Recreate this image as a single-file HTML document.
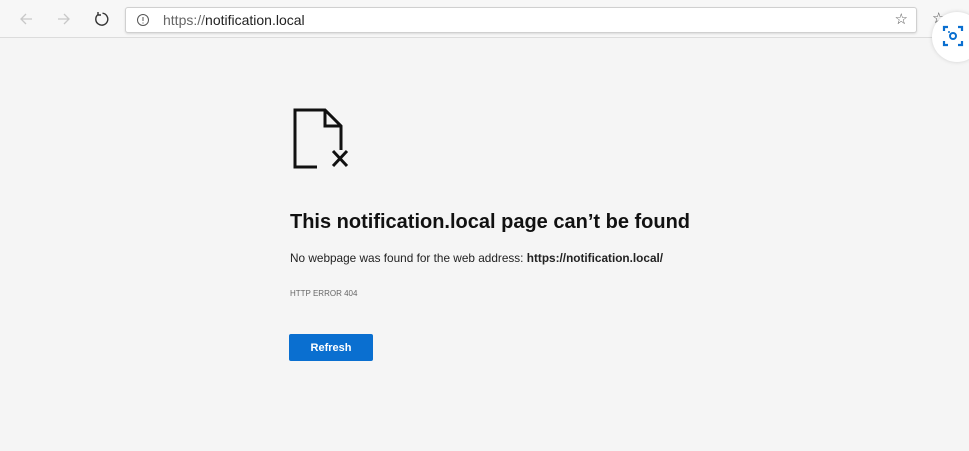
<!DOCTYPE html><html><head><style>
body{margin:0;width:969px;height:451px;background:#f5f5f5;font-family:"Liberation Sans",sans-serif;position:relative;overflow:hidden}
.bar{position:absolute;top:0;left:0;width:969px;height:37px;background:#f7f7f7;border-bottom:1px solid #dcdcdc}
.url{position:absolute;left:125px;top:7px;width:790px;height:24px;background:#fff;border:1px solid #d0d0d0;border-radius:3px;box-shadow:0 1px 2px rgba(0,0,0,.12)}
.url span{position:absolute;left:37px;top:4px;font-size:14px;color:#222}
.url span i{font-style:normal;color:#666}
h1{position:absolute;left:290px;top:211px;margin:0;font-size:20px;font-weight:bold;color:#111;white-space:nowrap}
.p{position:absolute;left:290px;top:251px;font-size:11.8px;color:#222;white-space:nowrap}
.e{position:absolute;left:290px;top:289px;font-size:8px;color:#666}
.btn{position:absolute;left:289px;top:334px;width:84px;height:27px;background:#0a6fd0;border-radius:2px;color:#fff;font-size:11px;font-weight:bold;text-align:center;line-height:28px}
.circ{position:absolute;left:932px;top:12px;width:50px;height:50px;border-radius:50%;background:#fff;box-shadow:0 0 4px rgba(0,0,0,.15)}
</style></head><body>
<div class="bar">
<svg style="position:absolute;left:18px;top:11px" width="16" height="16"><path d="M14 8H3M8 3L3 8l5 5" stroke="#c8c8c8" stroke-width="1.3" fill="none"/></svg>
<svg style="position:absolute;left:56px;top:11px" width="16" height="16"><path d="M2 8h11M8 3l5 5-5 5" stroke="#c8c8c8" stroke-width="1.3" fill="none"/></svg>
<svg style="position:absolute;left:93px;top:11px" width="16" height="16"><path d="M5 3.5A6 6 0 1 0 9.5 2.2M5 1v3h3" stroke="#333" stroke-width="1.4" fill="none"/></svg>
<div class="url"><svg style="position:absolute;left:10px;top:5px" width="14" height="14"><circle cx="7" cy="7" r="5.5" stroke="#555" fill="none"/><path d="M7 4v4M7 9.5v1" stroke="#555"/></svg><span><i>https://</i>notification.local</span>
<div style="position:absolute;right:8px;top:2px;font-size:15px;color:#555">☆</div></div>
<div style="position:absolute;left:932px;top:9px;font-size:15px;color:#444">☆</div>
</div>
<div class="circ"><svg style="position:absolute;left:10px;top:12px" width="22" height="24"><path d="M2 7V3h4M16 3h4v4M20 17v4h-4M6 21H2v-4" stroke="#0a6fd0" stroke-width="2.2" fill="none"/><circle cx="11" cy="12" r="3" stroke="#0a6fd0" stroke-width="2" fill="none"/><circle cx="7" cy="8" r="1" fill="#0a6fd0"/></svg></div>
<svg style="position:absolute;left:290px;top:105px" width="65" height="70"><path d="M27 62H5V5h30l16 16v24M35 5v16h16" stroke="#111" stroke-width="3" fill="none"/><path d="M43 46l14 15M57 46L43 61" stroke="#111" stroke-width="3"/></svg>
<h1>This notification.local page can’t be found</h1>
<div class="p">No webpage was found for the web address: <b>https://notification.local/</b></div>
<div class="e">HTTP ERROR 404</div>
<div class="btn">Refresh</div>
</body></html>
